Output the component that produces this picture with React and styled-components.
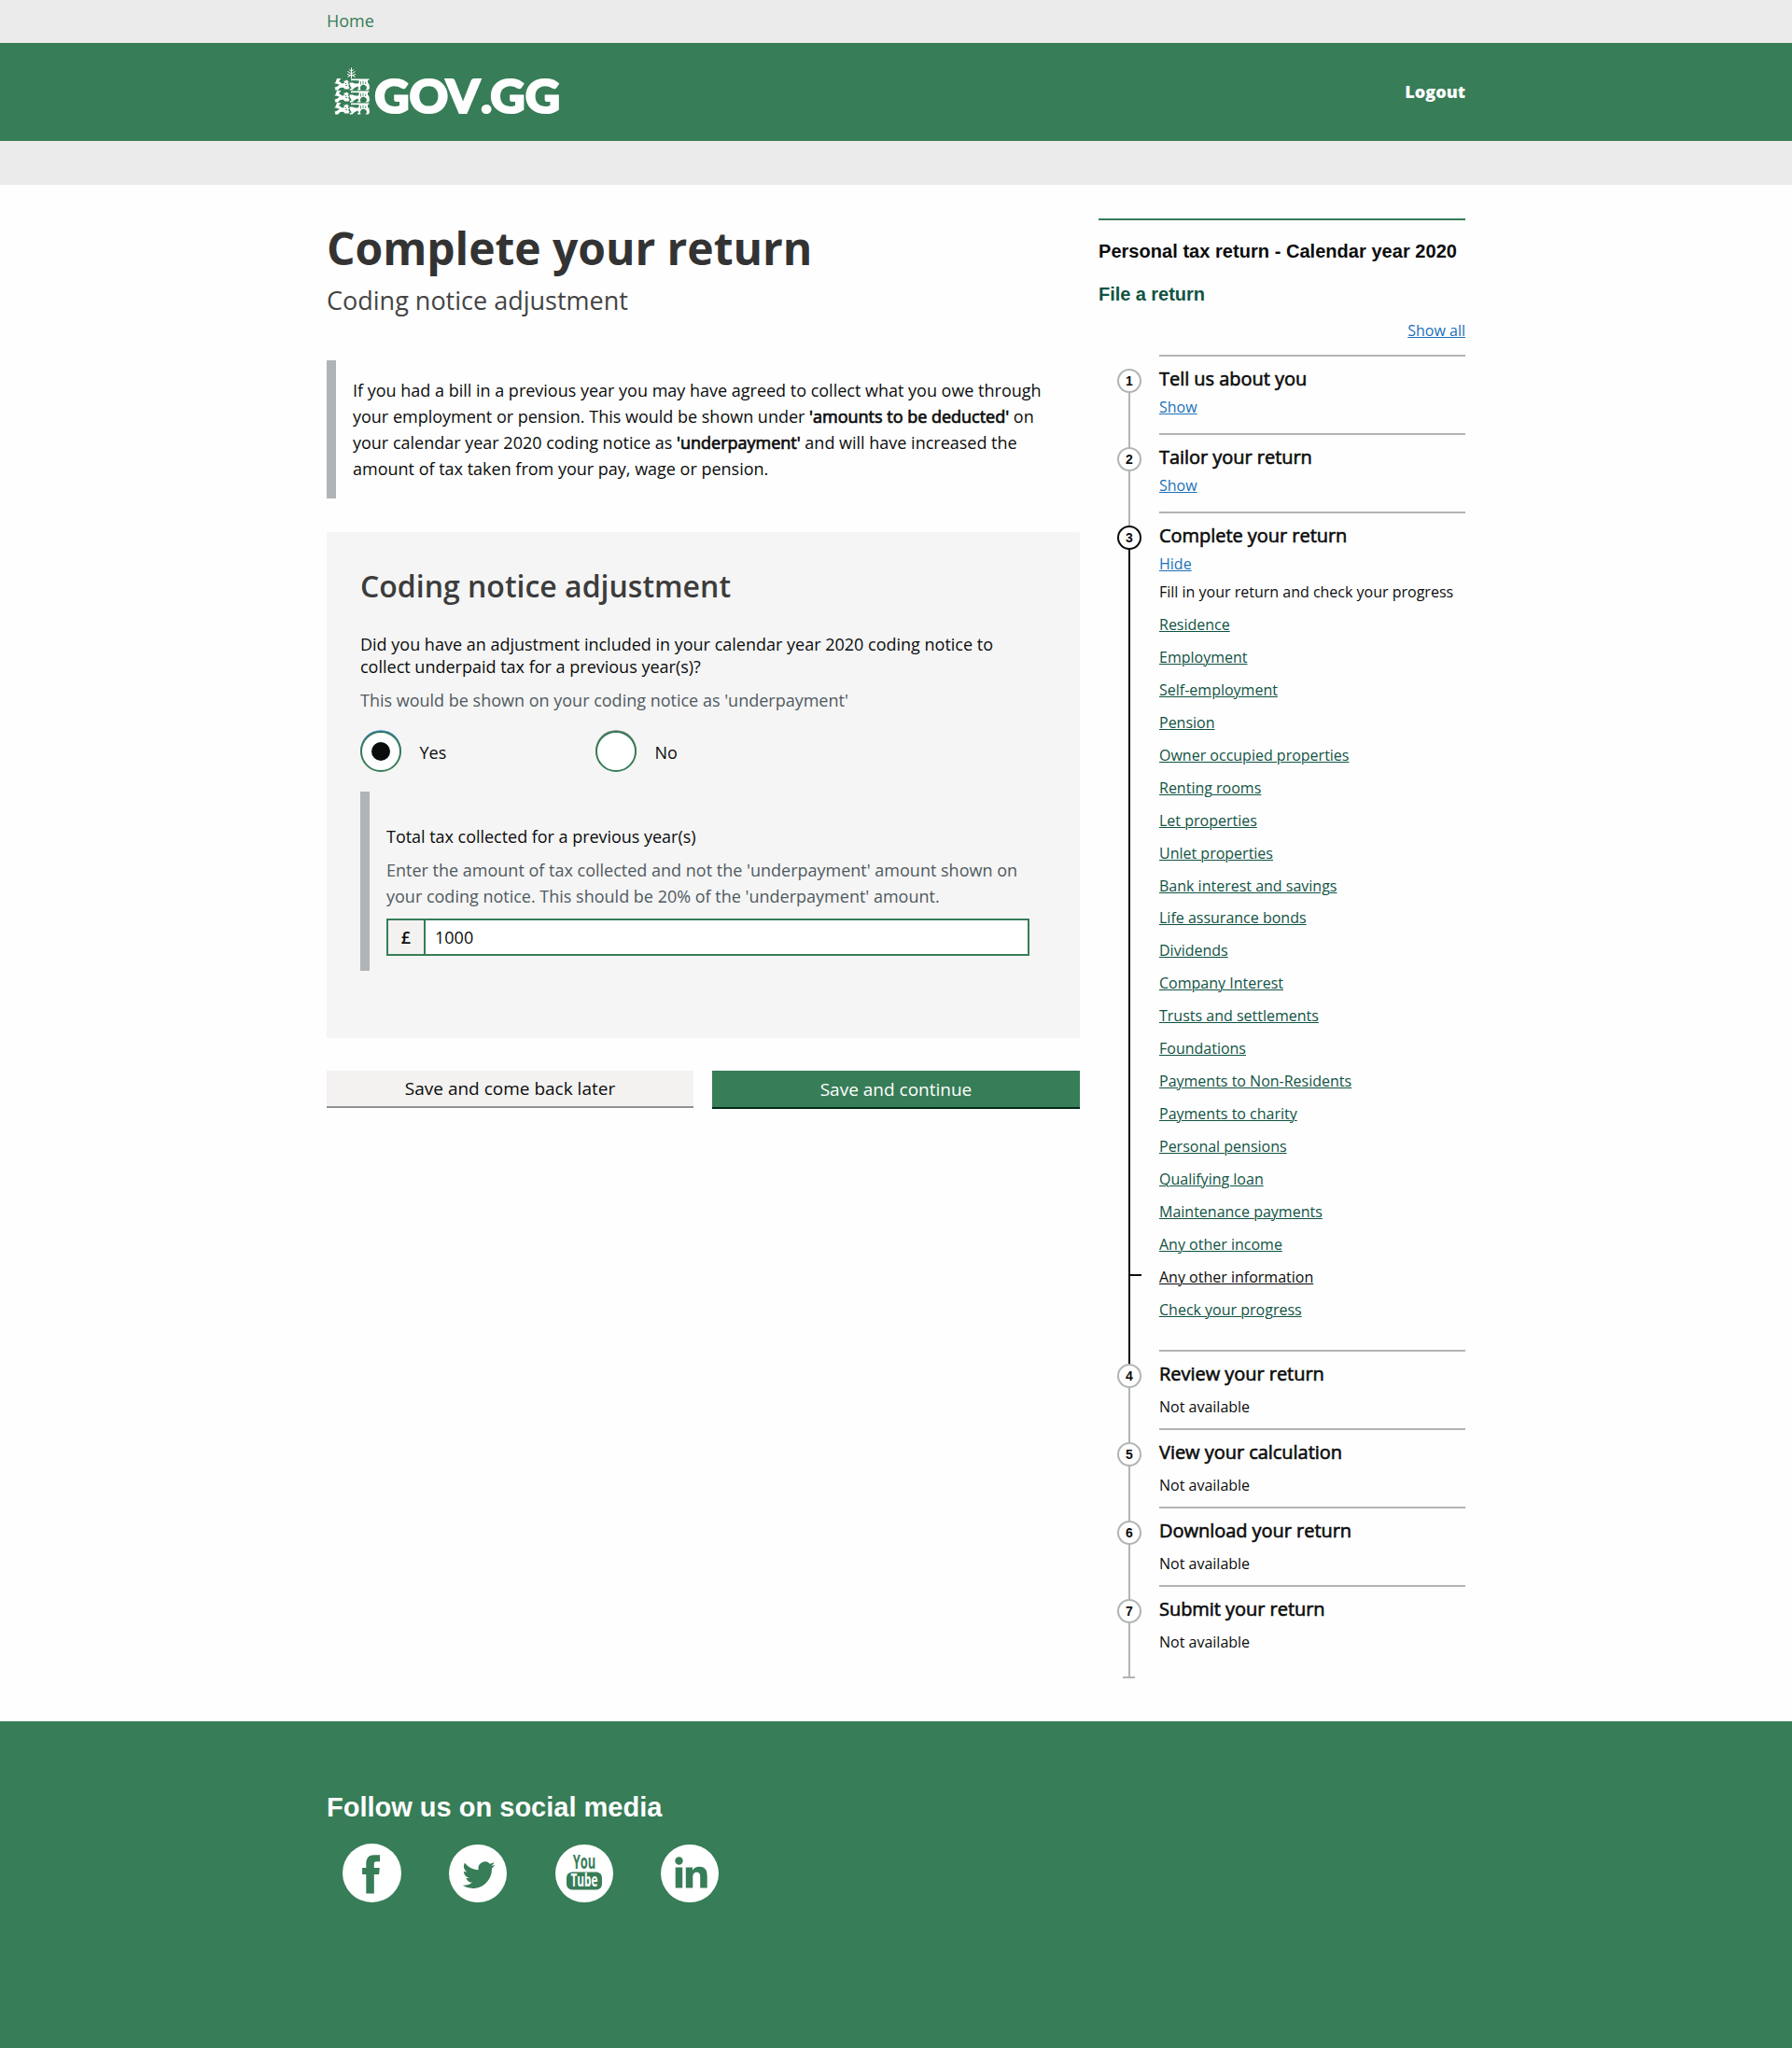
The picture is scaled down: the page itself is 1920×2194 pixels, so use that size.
import React from "react";
import styled, { createGlobalStyle, css } from "styled-components";

const GREEN = "#377d57";
const LINK = "#115344";
const GREY = "#b0b4b6";
const INK = "#0b0c0c";

const GlobalStyle = createGlobalStyle`
  * { box-sizing: border-box; }
  body {
    margin: 0;
    background: #fefefe;
    color: ${INK};
    font-family: "Open Sans", "Noto Sans", sans-serif;
    font-size: 18px;
  }
  h1, h2, h3, p, ol, ul { margin: 0; padding: 0; font-weight: 400; }
  ol, ul { list-style: none; }
`;

const Page = styled.div`
  display: flex;
  flex-direction: column;
  min-height: 2194px;
`;

const Container = styled.div`
  width: 1220px;
  margin: 0 auto;
`;

const TopBar = styled.nav`
  height: 46px;
  background: #ebebeb;
  line-height: 45px;
  a { color: ${GREEN}; text-decoration: none; }
`;

const Header = styled.header`
  height: 105px;
  background: ${GREEN};
`;

const HeaderRow = styled(Container)`
  display: flex;
  justify-content: space-between;
  align-items: center;
  height: 105px;
`;

const Logo = styled.svg`
  display: block;
  width: 260px;
  height: 105px;
`;

const Logout = styled.a`
  padding-bottom: 2px;
  color: #fff;
  font-size: 18px;
  font-weight: 800;
  text-decoration: none;
`;

const SubBar = styled.div`
  height: 47px;
  background: #ebebeb;
`;

const Columns = styled(Container)`
  display: flex;
  justify-content: space-between;
  align-items: flex-start;
  height: 1646px;
  padding-top: 36px;
`;

const Main = styled.main`
  width: 807px;
`;

const Title = styled.h1`
  height: 64px;
  line-height: 64px;
  font-size: 48px;
  font-weight: 700;
  letter-spacing: -0.05px;
  color: #333;
`;

const Subtitle = styled.p`
  height: 48px;
  line-height: 48px;
  font-size: 27px;
  color: #444;
`;

const Inset = styled.div`
  border-left: 10px solid ${GREY};
`;

const Quote = styled(Inset)`
  height: 148px;
  margin-top: 40px;
  padding: 18px 20px 18px 18px;
  line-height: 28px;
  letter-spacing: -0.005px;
`;

const Strong = styled.span`
  -webkit-text-stroke: 0.7px currentColor;
`;

const Panel = styled.section`
  height: 542px;
  margin-top: 36px;
  padding: 35px 36px 36px;
  background: #f5f5f5;
`;

const PanelTitle = styled.h2`
  height: 46px;
  line-height: 46px;
  font-size: 32px;
  font-weight: 600;
  color: #3c3c3c;
`;

const Question = styled.p`
  margin-top: 27px;
  line-height: 24px;
`;

const Hint = styled.p`
  margin-top: 10px;
  line-height: 28px;
  color: #505a5f;
`;

const Radios = styled.div`
  display: flex;
  margin-top: 19px;
`;

const RadioLabel = styled.label`
  display: flex;
  gap: 19.5px;
  width: 252px;
  height: 44px;
  line-height: 46px;
`;

const RadioDial = styled.span`
  display: flex;
  align-items: center;
  justify-content: center;
  width: 44px;
  height: 44px;
  border: 2px solid ${GREEN};
  border-radius: 50%;
  background: #fff;
  box-shadow: 0 -1px 0 -0.2px ${(p) => (p.$checked ? "#2f7ff0" : "#777")};
  &::after {
    content: "";
    width: 20px;
    height: 20px;
    border-radius: 50%;
    background: ${(p) => (p.$checked ? INK : "transparent")};
  }
`;

const Conditional = styled(Inset)`
  height: 192px;
  margin-top: 21px;
  padding: 36px 18px 0;
`;

const FieldLabel = styled.p`
  line-height: 24px;
  letter-spacing: -0.03px;
`;

const MoneyField = styled.div`
  display: flex;
  width: 689px;
  height: 40px;
  margin-top: 10px;
  border: 2px solid ${GREEN};
  background: #fff;
  line-height: 37px;
`;

const Prefix = styled.span`
  width: 40px;
  border-right: 2px solid ${GREEN};
  background: #f3f2f1;
  text-align: center;
  font-weight: 600;
`;

const MoneyInput = styled.input`
  flex: 1;
  min-width: 0;
  border: 0;
  outline: 0;
  padding: 1px 10px 0;
  background: transparent;
  color: ${INK};
  font: inherit;
`;

const Actions = styled.div`
  display: flex;
  justify-content: space-between;
  align-items: flex-start;
  margin-top: 35px;
`;

const Button = styled.button`
  border: 0;
  padding: 0;
  font-family: inherit;
  font-size: 19px;
  ${(p) =>
    p.$primary
      ? css`
          width: 394px;
          height: 41px;
          background: ${GREEN};
          border-bottom: 2px solid #002d18;
          color: #fff;
        `
      : css`
          width: 393px;
          height: 40px;
          background: #f3f2f1;
          border-bottom: 2px solid #929191;
          color: ${INK};
        `}
`;

const Sidebar = styled.aside`
  width: 393px;
  border-top: 2px solid ${GREEN};
  font-size: 16px;
`;

const SideTitle = styled.h2`
  margin-top: 21px;
  line-height: 24px;
  font-family: "Liberation Sans", Arial, sans-serif;
  font-size: 20px;
  font-weight: 700;
  letter-spacing: 0.04px;
  white-space: nowrap;
`;

const SideLink = styled(SideTitle)`
  margin-top: 22px;
  letter-spacing: -0.05px;
  color: ${LINK};
`;

const ShowAll = styled.p`
  margin-top: 12px;
  height: 41px;
  line-height: 30px;
  text-align: right;
`;

const ToggleLink = styled.a`
  color: #1d70b8;
  text-decoration: underline;
  text-decoration-thickness: 1px;
`;

const Step = styled.li`
  position: relative;
  display: grid;
  grid-template-columns: 65px 1fr;
  height: ${(p) => p.$height}px;
  &::before {
    content: "";
    position: absolute;
    left: 32px;
    top: 15px;
    width: 2px;
    height: 100%;
    background: ${(p) => (p.$active ? INK : GREY)};
  }
`;

const StepNumber = styled.span`
  position: relative;
  z-index: 1;
  width: 26px;
  height: 26px;
  margin: 15px 0 0 20px;
  border: 2px solid ${(p) => (p.$active ? INK : GREY)};
  border-radius: 50%;
  background: #fff;
  font: 700 14px/22px "Liberation Sans", Arial, sans-serif;
  text-align: center;
`;

const StepBody = styled.div`
  border-top: 2px solid ${GREY};
  padding-top: 8px;
`;

const StepTitle = styled.h3`
  line-height: 32px;
  font-size: 20px;
  letter-spacing: -0.04px;
  -webkit-text-stroke: 0.6px currentColor;
`;

const StepToggle = styled.p`
  line-height: 28px;
`;

const StepText = styled.p`
  margin-top: ${(p) => p.$gap}px;
  line-height: 30px;
`;

const TaskList = styled.ul`
  margin-top: 3px;
`;

const Task = styled.li`
  position: relative;
  height: 34.95px;
  line-height: 35px;
  a {
    color: ${(p) => (p.$current ? INK : LINK)};
    text-decoration-thickness: 1px;
  }
  ${(p) =>
    p.$current &&
    css`
      &::before {
        content: "";
        position: absolute;
        left: -33px;
        top: 14px;
        width: 14px;
        height: 2px;
        background: ${INK};
      }
    `}
`;

const EndCap = styled.div`
  position: relative;
  z-index: 1;
  width: 13px;
  height: 2px;
  margin: 14px 0 0 26px;
  background: ${GREY};
`;

const Footer = styled.footer`
  flex: 1;
  background: ${GREEN};
`;

const FooterTitle = styled.h2`
  padding-top: 75px;
  line-height: 34px;
  color: #fff;
  font-family: "Liberation Sans", Arial, sans-serif;
  font-size: 29px;
  font-weight: 700;
`;

const SocialRow = styled.div`
  display: flex;
  align-items: center;
  gap: 51.3px;
  margin-top: 22px;
  padding-left: 17px;
`;

const SocialIcon = styled.svg`
  display: block;
  width: ${(p) => p.$size}px;
  height: ${(p) => p.$size}px;
  fill: ${GREEN};
`;

const Lion = ({ y }) => (
  <g transform={`translate(8 ${y})`}>
    <path d="M3 0l4.500.3-2.500 2.700 4 2.700 2-1.200-.8-2 2 .3.8-1.300 2.500 1.500-.5 2 1 1.500-1 1.500 1.500 1.500-1 2-4 0-1.500-1.700-3.500.2-2.700 2.800-3.300-.5 1-1.300-1.200-1.300 3.200-1.200 2.300-1.700-3.800-1.200-2-.3 1.500-1z" />
    <path d="M16.500 4.500h3l3 1 3.500 0 1-3h-9v-2h19.500l-.3 1.500h-1.200v2.500l1.500 2 .5 4-1.300 2h-3.200l1.700-2.200-1-2.300-2.700-1.500-2.500 1-1.200 2.500.7 2.500h-3.500v-1.200h1.500l-1-2.800-3.500 1.500-2.500 2.500h-3l.5-1.300 1.700-.7-2-3.500z" />
    <path
      d="M18.500 2.700h7M28.500 3v3.500M31 2.500v3.500M33.700 3.500v2.500M11.500 5l1.800.8M12 7.800l2-.5"
      stroke={GREEN}
      strokeWidth="0.8"
      fill="none"
    />
  </g>
);

const letters = [
  ["G", 51.3],
  ["O", 88.4],
  ["V", 128],
  [".", 165],
  ["G", 175.2],
  ["G", 212.8],
];
const LETTER_STRETCH = 1.03;

const GovLogo = () => (
  <Logo viewBox="0 0 260 105" role="img" aria-label="GOV.GG">
    <g fill="#fff">
      <path
        d="M26.500 38V26.500M22.500 36.500l4-2.500 4 2.500M22 33.500l4.500 1.500 4.500-1.500M22.500 30.500l4 2.500 4-2.500M24.300 28.500l2.200 2 2.200-2"
        stroke="#fff"
        strokeWidth="1"
        fill="none"
      />
      <Lion y={38} />
      <Lion y={51} />
      <Lion y={64} />
    </g>
    <text
      transform={`scale(${LETTER_STRETCH} 1)`}
      y="75.200"
      x={letters.map(([, x]) => (x / LETTER_STRETCH).toFixed(2)).join(" ")}
      fill="#fff"
      stroke="#fff"
      strokeWidth="2.200"
      fontFamily="Lato, sans-serif"
      fontWeight="900"
      fontSize="50"
    >
      {letters.map(([c]) => c).join("")}
    </text>
  </Logo>
);

const stepsBefore = ["Tell us about you", "Tailor your return"];
const stepsAfter = [
  "Review your return",
  "View your calculation",
  "Download your return",
  "Submit your return",
];
const tasks = [
  "Residence",
  "Employment",
  "Self-employment",
  "Pension",
  "Owner occupied properties",
  "Renting rooms",
  "Let properties",
  "Unlet properties",
  "Bank interest and savings",
  "Life assurance bonds",
  "Dividends",
  "Company Interest",
  "Trusts and settlements",
  "Foundations",
  "Payments to Non-Residents",
  "Payments to charity",
  "Personal pensions",
  "Qualifying loan",
  "Maintenance payments",
  "Any other income",
  "Any other information",
  "Check your progress",
];

export default function App() {
  return (
    <Page>
      <GlobalStyle />
      <TopBar>
        <Container>
          <a href="#home">Home</a>
        </Container>
      </TopBar>
      <Header>
        <HeaderRow>
          <GovLogo />
          <Logout href="#logout">Logout</Logout>
        </HeaderRow>
      </Header>
      <SubBar />
      <Columns>
        <Main>
          <Title>Complete your return</Title>
          <Subtitle>Coding notice adjustment</Subtitle>
          <Quote>
            If you had a bill in a previous year you may have agreed to collect
            what you owe through your employment or pension. This would be shown
            under <Strong>'amounts to be deducted'</Strong> on your calendar
            year 2020 coding notice as <Strong>'underpayment'</Strong> and will
            have increased the amount of tax taken from your pay, wage or
            pension.
          </Quote>
          <Panel>
            <PanelTitle>Coding notice adjustment</PanelTitle>
            <Question>
              Did you have an adjustment included in your calendar year 2020
              coding notice to collect underpaid tax for a previous year(s)?
            </Question>
            <Hint>
              This would be shown on your coding notice as 'underpayment'
            </Hint>
            <Radios>
              <RadioLabel>
                <RadioDial $checked />
                Yes
              </RadioLabel>
              <RadioLabel>
                <RadioDial />
                No
              </RadioLabel>
            </Radios>
            <Conditional>
              <FieldLabel>Total tax collected for a previous year(s)</FieldLabel>
              <Hint>
                Enter the amount of tax collected and not the 'underpayment'
                amount shown on your coding notice. This should be 20% of the
                'underpayment' amount.
              </Hint>
              <MoneyField>
                <Prefix>£</Prefix>
                <MoneyInput defaultValue="1000" aria-label="Total tax" />
              </MoneyField>
            </Conditional>
          </Panel>
          <Actions>
            <Button>Save and come back later</Button>
            <Button $primary>Save and continue</Button>
          </Actions>
        </Main>
        <Sidebar>
          <SideTitle>Personal tax return - Calendar year 2020</SideTitle>
          <SideLink>File a return</SideLink>
          <ShowAll>
            <ToggleLink href="#all">Show all</ToggleLink>
          </ShowAll>
          <ol>
            {stepsBefore.map((title, i) => (
              <Step key={title} $height={84}>
                <StepNumber>{i + 1}</StepNumber>
                <StepBody>
                  <StepTitle>{title}</StepTitle>
                  <StepToggle>
                    <ToggleLink href="#show">Show</ToggleLink>
                  </StepToggle>
                </StepBody>
              </Step>
            ))}
            <Step $height={898} $active>
              <StepNumber $active>3</StepNumber>
              <StepBody>
                <StepTitle>Complete your return</StepTitle>
                <StepToggle>
                  <ToggleLink href="#hide">Hide</ToggleLink>
                </StepToggle>
                <StepText $gap={1}>
                  Fill in your return and check your progress
                </StepText>
                <TaskList>
                  {tasks.map((task) => (
                    <Task key={task} $current={task === "Any other information"}>
                      <a href="#task">{task}</a>
                    </Task>
                  ))}
                </TaskList>
              </StepBody>
            </Step>
            {stepsAfter.map((title, i) => (
              <Step key={title} $height={84}>
                <StepNumber>{i + 4}</StepNumber>
                <StepBody>
                  <StepTitle>{title}</StepTitle>
                  <StepText $gap={4}>Not available</StepText>
                </StepBody>
              </Step>
            ))}
          </ol>
          <EndCap />
        </Sidebar>
      </Columns>
      <Footer>
        <Container>
          <FooterTitle>Follow us on social media</FooterTitle>
          <SocialRow>
            <SocialIcon $size={63} viewBox="0 0 63 63">
              <circle cx="31.500" cy="31.500" r="31.500" fill="#fff" />
              <path d="M25.300 53.500V33h-4.200v-7h4.200v-4.500c0-6 3-9.200 8.500-9.200h6.200v7h-3.700c-2 0-2.500 1-2.500 2.700v4h6l-.7 7h-5.300v20.500z" />
            </SocialIcon>
            <SocialIcon $size={62} viewBox="0 0 62 62">
              <circle cx="31" cy="31" r="31" fill="#fff" />
              <g transform="translate(14.500 15.200) scale(1.460)">
                <path d="M23.950 4.570a10 10 0 0 1-2.820.780 4.960 4.960 0 0 0 2.160-2.730 9.900 9.900 0 0 1-3.120 1.190 4.920 4.920 0 0 0-8.380 4.480C7.690 8.090 4.070 6.130 1.640 3.160a4.920 4.920 0 0 0 1.520 6.570 4.900 4.900 0 0 1-2.230-.610v.060a4.920 4.920 0 0 0 3.950 4.830 5 5 0 0 1-2.210.080 4.940 4.940 0 0 0 4.600 3.420A9.870 9.870 0 0 1 0 19.540a14 14 0 0 0 7.550 2.210c9.050 0 14-7.500 14-13.980 0-.210 0-.420-.020-.630a9.940 9.940 0 0 0 2.420-2.570z" />
              </g>
            </SocialIcon>
            <SocialIcon $size={62} viewBox="0 0 62 62">
              <circle cx="31" cy="31" r="31" fill="#fff" />
              <rect x="12" y="29.500" width="38" height="19" rx="6" />
              <g
                fontFamily="'Open Sans', sans-serif"
                fontWeight="700"
                textAnchor="middle"
              >
                <text transform="translate(31 26) scale(0.630 1)" fontSize="20.500">
                  You
                </text>
                <text
                  transform="translate(31 45) scale(0.620 1)"
                  fontSize="19"
                  fill="#fff"
                >
                  Tube
                </text>
              </g>
            </SocialIcon>
            <SocialIcon $size={62} viewBox="0 0 62 62">
              <circle cx="31" cy="31" r="31" fill="#fff" />
              <circle cx="19.500" cy="17.500" r="4.200" />
              <path d="M15.700 24.500h7.500v22h-7.500zM26.800 24.500h7.200v3.200c1.400-2.500 4-3.900 7.300-3.900 6.500 0 8.400 4.200 8.400 10.200v12.500h-7.500V35.500c0-3-.3-5.700-3.700-5.700s-4.200 2.600-4.200 5.500v11.200h-7.500z" />
            </SocialIcon>
          </SocialRow>
        </Container>
      </Footer>
    </Page>
  );
}
